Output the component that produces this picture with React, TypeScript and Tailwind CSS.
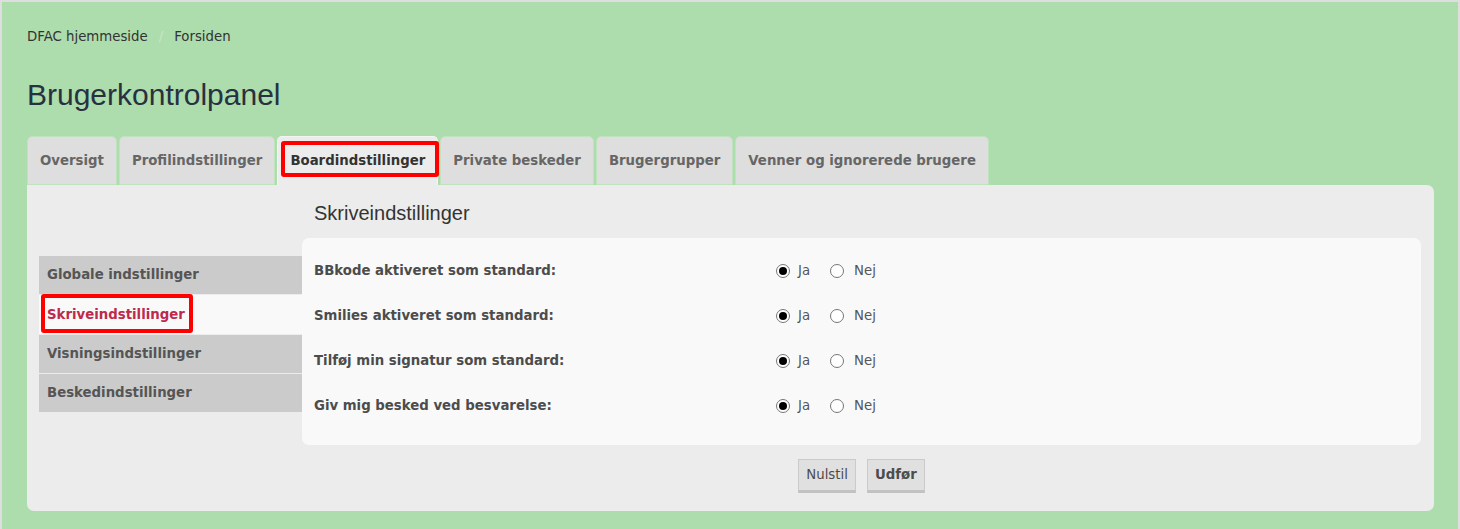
import React from "react"

const tabs = [
  "Oversigt",
  "Profilindstillinger",
  "Boardindstillinger",
  "Private beskeder",
  "Brugergrupper",
  "Venner og ignorerede brugere",
]

const menu = [
  "Globale indstillinger",
  "Skriveindstillinger",
  "Visningsindstillinger",
  "Beskedindstillinger",
]

const rows = [
  "BBkode aktiveret som standard:",
  "Smilies aktiveret som standard:",
  "Tilføj min signatur som standard:",
  "Giv mig besked ved besvarelse:",
]

function Radio({ checked }: { checked?: boolean }) {
  return (
    <span className="w-[14px] h-[14px] rounded-full border border-[#767676] bg-white flex items-center justify-center">
      {checked && <span className="w-[8px] h-[8px] rounded-full bg-black" />}
    </span>
  )
}

export default function App() {
  return (
    <div className="min-h-screen bg-[#addcad] border-l-2 border-t-2 border-r-2 border-[#dedede] pl-[25px] pr-[24px] font-['DejaVu_Sans',sans-serif] text-[13.3px]">

      {/* breadcrumb */}
      <div className="flex items-center h-[22px] mt-[24px] text-[#333]">
        <span>DFAC hjemmeside</span>
        <span className="mx-[11px] text-[#c9e6c9]">/</span>
        <span>Forsiden</span>
      </div>

      {/* title */}
      <h1 className="mt-[28px] h-[36px] flex items-center font-['Liberation_Sans',sans-serif] text-[30px] text-[#28313f]">
        Brugerkontrolpanel
      </h1>

      {/* tabs */}
      <div className="flex gap-[2px] mt-[24px] h-[49px]">
        {tabs.map((tab) => {
          const active = tab === "Boardindstillinger"
          return (
            <div
              key={tab}
              className={
                active
                  ? "relative flex items-center px-[12px] rounded-t-[5px] bg-[#ececec] border border-b-0 border-[#f4f4f4] font-bold text-[#333]"
                  : "flex items-center px-[12px] rounded-t-[5px] bg-[#dedede] border border-[#bfe2bf] font-bold text-[#666]"
              }
            >
              {tab}
              {active && (
                <span className="absolute left-[3px] right-[-2px] top-[4px] h-[36px] border-4 border-[#ff0000] rounded-[3px]" />
              )}
            </div>
          )
        })}
      </div>

      {/* panel */}
      <div className="bg-[#ececec] rounded-b-[7px] rounded-tr-[7px] pl-[12px] pr-[13px] flex h-[326px]">

        {/* side menu */}
        <div className="w-[263px] pt-[71px] flex flex-col gap-[1px]">
          {menu.map((item) => {
            const active = item === "Skriveindstillinger"
            return (
              <div
                key={item}
                className={
                  active
                    ? "relative h-[39px] flex items-center pl-[8px] bg-[#f9f9f9] font-bold text-[#bc2a4d]"
                    : "h-[38px] flex items-center pl-[8px] bg-[#cbcbcb] font-bold text-[#555]"
                }
              >
                {item}
                {active && (
                  <span className="absolute left-[2px] top-[-1px] w-[152px] h-[39px] border-4 border-[#ff0000] rounded-[3px]" />
                )}
              </div>
            )
          })}
        </div>

        {/* content */}
        <div className="flex-1 flex flex-col">
          <h2 className="h-[53px] flex items-center pl-[12px] pt-[2px] font-['Liberation_Sans',sans-serif] text-[20px] text-[#333]">
            Skriveindstillinger
          </h2>

          <div className="bg-[#f9f9f9] rounded-[7px] pt-[10px] pb-[17px] pl-[12px]">
            {rows.map((row) => (
              <div key={row} className="flex items-center h-[45px]">
                <div className="w-[462px] font-bold text-[#4c4c4c]">{row}</div>
                <div className="flex items-center text-[#555]">
                  <Radio checked />
                  <span className="ml-[8px]">Ja</span>
                  <span className="ml-[20px]"><Radio /></span>
                  <span className="ml-[10px]">Nej</span>
                </div>
              </div>
            ))}
          </div>

          <div className="flex justify-center gap-[11px] mt-[14px]">
            <button className="h-[34px] px-[7px] bg-[#e0e0e0] border border-[#cacaca] border-b-[3px] border-b-[#c2c2c2] text-[#4c4c4c]">
              Nulstil
            </button>
            <button className="h-[34px] px-[7px] bg-[#e0e0e0] border border-[#cacaca] border-b-[3px] border-b-[#c2c2c2] font-bold text-[#4c4c4c]">
              Udfør
            </button>
          </div>
        </div>

      </div>
    </div>
  )
}
